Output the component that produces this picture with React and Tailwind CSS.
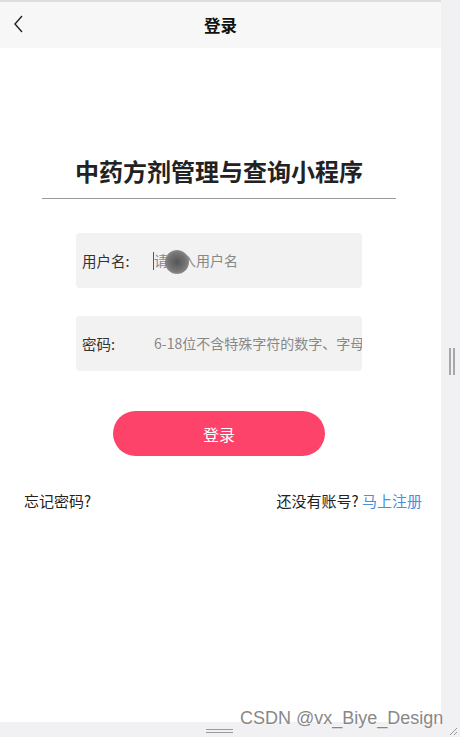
import React from 'react'

const font = { fontFamily: '"Noto Sans CJK SC", "Noto Sans", sans-serif' }

const Field = ({ label, placeholder, children }) => (
  <div className="relative flex h-[55px] w-[286px] items-center overflow-hidden rounded-[4px] bg-[#f2f2f2] pl-[6px]">
    <span className="w-[72px] shrink-0 text-[14.5px] text-[#333]">{label}</span>
    <span className="flex-1 overflow-hidden whitespace-nowrap text-[14px] text-[#888]">{placeholder}</span>
    {children}
  </div>
)

const App = () => {
  return (
    <div className="relative flex h-[737px] w-[460px] flex-col overflow-hidden bg-[#f1f1f3]" style={font}>
      <div className="flex h-[722px]">
        <div className="flex w-[441px] flex-col bg-white">
          <div className="h-[2px] bg-[#dedede]" />
          <header className="relative flex h-[46px] items-center justify-center bg-[#f7f7f7]">
            <svg className="absolute left-[12px] top-[12px]" width="14" height="20" viewBox="0 0 14 20" fill="none">
              <path d="M10 2 L3 10 L10 18" stroke="#222" strokeWidth="1.4" />
            </svg>
            <span className="text-[16.5px] font-bold text-[#111]">登录</span>
          </header>

          <div className="flex flex-col pr-[3px]">
            <div className="mt-[108px] flex flex-col items-center">
              <h1 className="text-[24px] font-bold leading-[30px] text-[#222]">中药方剂管理与查询小程序</h1>
              <div className="mt-[12px] h-px w-[354px] bg-[#9a9a9a]" />
            </div>

            <div className="mt-[34px] flex flex-col items-center gap-[28px]">
              <Field label="用户名:" placeholder="请输入用户名">
                <span className="absolute left-[77px] top-[19px] h-[18px] w-px bg-[#555]" />
                <span className="absolute left-[89px] top-[17px] h-[24px] w-[24px] rounded-full bg-[radial-gradient(circle,#555_0%,#777_55%,rgba(140,140,140,0.6)_100%)]" />
              </Field>
              <Field label="密码:" placeholder="6-18位不含特殊字符的数字、字母" />
            </div>

            <div className="mt-[40px] flex justify-center">
              <button className="h-[45px] w-[212px] rounded-full bg-[#fd4369] text-[16px] text-white">登录</button>
            </div>
          </div>

          <div className="mt-[34px] flex items-center justify-between pl-[24px] pr-[19px] text-[15px] text-[#222]">
            <span>忘记密码?</span>
            <span>
              还没有账号? <span className="text-[#4a8ee0]">马上注册</span>
            </span>
          </div>
        </div>
        <div className="relative w-[19px]">
          <div className="absolute left-[8px] top-[348px] flex gap-[2px]">
            <span className="h-[27px] w-[2px] bg-[#a8a8a8]" />
            <span className="h-[27px] w-[2px] bg-[#a8a8a8]" />
          </div>
        </div>
      </div>
      <div className="relative h-[15px] bg-[#f1f1f3]">
        <div className="absolute left-[206px] top-[7px] flex flex-col gap-[2px]">
          <span className="h-px w-[27px] bg-[#999]" />
          <span className="h-px w-[27px] bg-[#999]" />
        </div>
        <svg className="absolute right-[2px] bottom-[1px]" width="10" height="10" viewBox="0 0 10 10">
          <path d="M9 2 L2 9 M9 6 L6 9" stroke="#999" strokeWidth="1" />
        </svg>
      </div>
      <span
        className="absolute left-[240px] top-[705px] text-[18px] text-[#888]"
        style={{ fontFamily: '"Liberation Sans", Arial, sans-serif', textShadow: '0 0 2px #fff' }}
      >
        CSDN @vx_Biye_Design
      </span>
    </div>
  )
}

export default App
